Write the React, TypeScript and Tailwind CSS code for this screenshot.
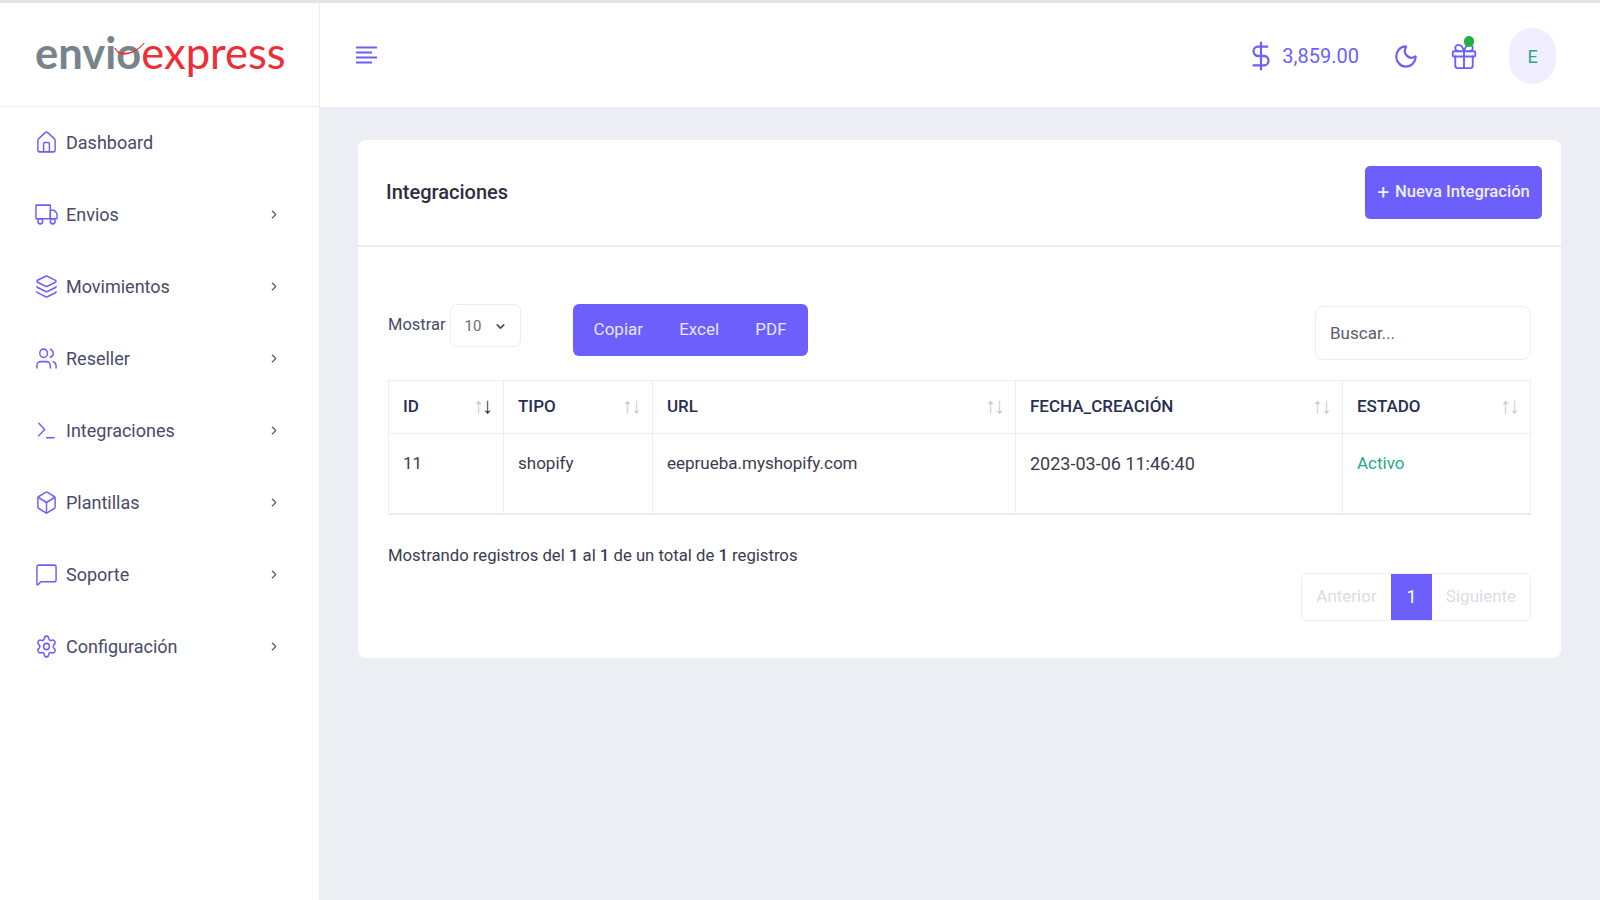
import { useState } from "react";
import { Box, ChevronDown, ChevronRight, DollarSign, Gift, House, Layers, MessageSquare, Moon, Settings, Terminal, Users } from "lucide-react";
import { FiTruck } from "react-icons/fi";

const navItems = [
  { label: "Dashboard", icon: House, arrow: false },
  { label: "Envios", icon: FiTruck, arrow: true },
  { label: "Movimientos", icon: Layers, arrow: true },
  { label: "Reseller", icon: Users, arrow: true },
  { label: "Integraciones", icon: Terminal, arrow: true },
  { label: "Plantillas", icon: Box, arrow: true },
  { label: "Soporte", icon: MessageSquare, arrow: true },
  { label: "Configuración", icon: Settings, arrow: true },
];

const columns = [
  { label: "ID", width: "w-[115px]", active: true },
  { label: "TIPO", width: "w-[149px]", active: false },
  { label: "URL", width: "w-[363px]", active: false },
  { label: "FECHA_CREACIÓN", width: "w-[327px]", active: false },
  { label: "ESTADO", width: "w-[188px]", active: false },
];

function SortArrows({ active }: { active: boolean }) {
  return (
    <span className="absolute right-[12px] top-[14px] text-[22px] leading-[22px] tracking-[-2px] font-normal text-[#c9c9d0]">
      ↑<span className={active ? "text-[#282f53]" : ""}>↓</span>
    </span>
  );
}

function Logo() {
  return (
    <div className="relative mb-[3px] flex items-baseline font-['Lato',sans-serif] text-[43.5px] leading-none">
      <span className="font-bold text-[#78848c]">envio</span>
      <span className="text-[#ee2e36]">express</span>
      <svg className="absolute left-[79px] top-[11px]" width="31" height="18" viewBox="0 0 32 18">
        <path d="M1 6c3 9 17 9 30-5C22 12 10 13 3 9z" fill="#ee2e36" stroke="#ee2e36" />
      </svg>
    </div>
  );
}

function MenuLines() {
  return (
    <svg width="21" height="18" viewBox="0 0 21 18" fill="none" stroke="#6c5ffc" strokeWidth="2.2">
      <path d="M0 1.5h21M0 6.5h16M0 11.5h21M0 16.5h16" />
    </svg>
  );
}

export default function App() {
  const [search, setSearch] = useState("");

  return (
    <div className="flex h-[900px] w-[1600px] flex-col overflow-hidden border-t-[3px] border-[#e4e4e6] bg-[#edeef3] font-['Roboto',sans-serif] text-[17px] text-[#282f53]">
      <header className="flex h-[104px] shrink-0 bg-white">
        <div className="flex w-[320px] shrink-0 items-center border-r border-b border-[#e9edf4] pl-[35px]">
          <Logo />
        </div>
        <div className="flex flex-1 items-center pl-[36px] pr-[44px]">
          <MenuLines />
          <div className="mt-[2px] ml-auto flex items-center text-[#6c5ffc]">
            <DollarSign className="h-[32px] w-[30px]" strokeWidth={1.75} preserveAspectRatio="none" />
            <span className="ml-[6px] text-[20px]">3,859.00</span>
            <Moon className="ml-[34px] h-[27px] w-[26px]" strokeWidth={2} preserveAspectRatio="none" />
            <div className="relative ml-[30px]">
              <Gift className="h-[31px] w-[30px]" strokeWidth={1.5} preserveAspectRatio="none" />
              <span className="absolute left-[15px] top-[-5px] h-[11px] w-[10px] rounded-full bg-[#1fb141]" />
            </div>
            <div className="ml-[30px] flex h-[56px] w-[47px] items-center justify-center rounded-full bg-[#f0eeff] text-[18px] text-[#2aa78c]">
              E
            </div>
          </div>
        </div>
      </header>

      <div className="flex flex-1">
        <aside className="w-[320px] shrink-0 border-r border-[#e9edf4] bg-white pl-[35px] pr-[38px]">
          {navItems.map(({ label, icon: Icon, arrow }) => (
            <div key={label} className="flex h-[72px] items-center pb-[2px] text-[#4a4a68]">
              <Icon className="h-[25px] w-[23px] text-[#6c5ffc]" strokeWidth={1.5} preserveAspectRatio="none" />
              <span className="ml-[8px] text-[18px]">{label}</span>
              {arrow && <ChevronRight className="ml-auto h-[15px] w-[14px] text-[#5c5c70]" />}
            </div>
          ))}
        </aside>

        <main className="flex-1 pl-[38px] pr-[39px] pt-[33px]">
          <section className="h-[518px] rounded-[8px] bg-white">
            <div className="flex h-[107px] items-center justify-between border-b-2 border-[#e9edf4] pl-[28px] pr-[19px]">
              <h1 className="pb-[2px] text-[20px] font-medium text-[#2e2e3e]">Integraciones</h1>
              <button className="flex h-[53px] w-[177px] items-center justify-center gap-[6px] rounded-[5px] bg-[#6c5ffc] text-[16.6px] font-medium text-[#eeeeff]">
                <span className="text-[21px] leading-none font-normal">+</span>
                Nueva Integración
              </button>
            </div>

            <div className="pl-[30px] pr-[30px] pt-[57px]">
              <div className="flex h-[76px] items-start">
                <span className="mt-[9px] text-[16.5px] text-[#4a4a68]">Mostrar</span>
                <div className="ml-[4px] flex h-[43px] w-[71px] items-center rounded-[7px] border border-[#e9edf4] pl-[14px] pt-[2px] text-[15px] text-[#6a6a7c]">
                  10
                  <ChevronDown className="ml-[13px] h-[13px] w-[13px] text-[#4a4a68]" strokeWidth={3} />
                </div>
                <div className="ml-[52px] flex h-[52px] w-[235px] items-center justify-between rounded-[6px] bg-[#6c5ffc] px-[21px] text-[17px] text-[#e8e6ff]">
                  <span>Copiar</span>
                  <span>Excel</span>
                  <span>PDF</span>
                </div>
                <input
                  value={search}
                  onChange={(e) => setSearch(e.target.value)}
                  placeholder="Buscar..."
                  className="mt-[2px] ml-auto h-[54px] w-[216px] rounded-[8px] border border-[#e9edf4] px-[14px] text-[17px] outline-none placeholder:text-[#5c5c70]"
                />
              </div>

              <table className="w-[1142px] table-fixed border-collapse">
                <thead>
                  <tr className="h-[53px]">
                    {columns.map((col) => (
                      <th key={col.label} className={`${col.width} relative border border-[#e9edf4] px-[14px] text-left text-[17px] font-medium text-[#282f53]`}>
                        {col.label}
                        <SortArrows active={col.active} />
                      </th>
                    ))}
                  </tr>
                </thead>
                <tbody>
                  <tr className="h-[80px] border-b-2 border-[#e9edf4] align-top text-[17px] text-[#3b3b50]">
                    <td className="border-x border-[#e9edf4] px-[14px] pt-[17px]">11</td>
                    <td className="border-x border-[#e9edf4] px-[14px] pt-[17px]">shopify</td>
                    <td className="border-x border-[#e9edf4] px-[14px] pt-[17px]">eeprueba.myshopify.com</td>
                    <td className="border-x border-[#e9edf4] px-[14px] pt-[16px] text-[18px]">2023-03-06 11:46:40</td>
                    <td className="border-x border-[#e9edf4] px-[14px] pt-[17px] text-[#2aa78c]">Activo</td>
                  </tr>
                </tbody>
              </table>

              <p className="mt-[30px] text-[16.7px] leading-[22px] text-[#3b3b50]">
                Mostrando registros del <span className="font-medium">1</span> al <span className="font-medium">1</span> de un total de <span className="font-medium">1</span> registros
              </p>

              <div className="mt-[6px] flex justify-end">
                <div className="flex h-[48px] items-stretch rounded-[6px] border border-[#eceef4] text-[17px] text-[#dcdce4]">
                  <span className="flex w-[89px] items-center justify-center">Anterior</span>
                  <span className="flex w-[41px] items-center justify-center bg-[#6c5ffc] text-[18px] text-white">1</span>
                  <span className="flex w-[98px] items-center justify-center">Siguiente</span>
                </div>
              </div>
            </div>
          </section>
        </main>
      </div>
    </div>
  );
}
